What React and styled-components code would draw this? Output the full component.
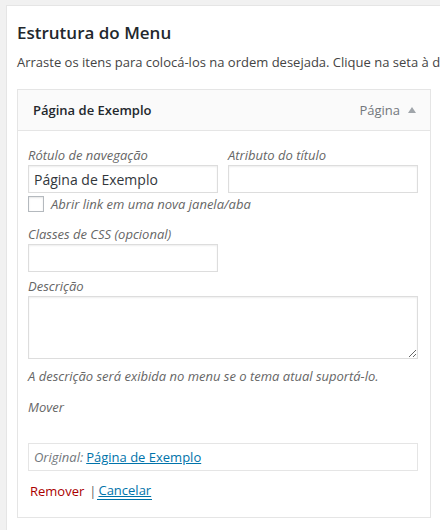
import React from 'react'
import styled, { createGlobalStyle } from 'styled-components'

const GlobalStyle = createGlobalStyle`
  html, body {
    margin: 0;
    padding: 0;
    background: #f1f1f1;
    overflow: hidden;
  }
  body {
    font-family: "Open Sans", "Liberation Sans", sans-serif;
    font-size: 13px;
    color: #444;
  }
`;

const Panel = styled.div`
  margin: 5px 0 0 6px;
  border-left: 1px solid #e5e5e5;
  border-top: 1px solid #e5e5e5;
  background: #fff;
  padding: 17px 10px 12px 10px;
  height: 530px;
  box-sizing: border-box;
`;

const Title = styled.h3`
  margin: 0;
  font-size: 17px;
  line-height: 20px;
  font-weight: 600;
  color: #23282d;
`;

const Intro = styled.p`
  margin: 9px 0 0;
  line-height: 20px;
  white-space: nowrap;
  color: #444;
`;

const Item = styled.div`
  width: 414px;
  margin-top: 17px;
`;

const Handle = styled.div`
  display: flex;
  align-items: center;
  height: 40px;
  padding: 0 14px 0 15px;
  border: 1px solid #e5e5e5;
  background: #fafafa;
`;

const ItemTitle = styled.span`
  flex: 1;
  font-weight: 600;
  color: #23282d;
`;

const ItemType = styled.span`
  color: #72777c;
  margin-right: 8px;
`;

const Arrow = styled.span`
  width: 0;
  height: 0;
  border-left: 4px solid transparent;
  border-right: 4px solid transparent;
  border-bottom: 6px solid #a0a5aa;
`;

const Settings = styled.div`
  padding: 15px 12px 17px 10px;
  border: 1px solid #e5e5e5;
  border-top: none;
`;

const Row = styled.div`
  display: grid;
  grid-template-columns: 190px 190px;
  column-gap: 10px;
`;

const Field = styled.div`
  display: flex;
  flex-direction: column;
  margin-top: ${p => p.$top || 0}px;
`;

const Label = styled.span`
  font-style: italic;
  color: #666;
  line-height: 18px;
  margin-bottom: 1px;
`;

const Input = styled.input`
  box-sizing: border-box;
  width: 190px;
  height: 28px;
  margin: 0;
  padding: 3px 5px;
  border: 1px solid #ddd;
  box-shadow: inset 0 1px 2px rgba(0, 0, 0, 0.07);
  font-family: "Open Sans", "Liberation Sans", sans-serif;
  font-size: 14px;
  color: #32373c;
  outline: none;
`;

const TextArea = styled.textarea`
  box-sizing: border-box;
  width: 390px;
  height: 63px;
  margin: 0;
  border: 1px solid #ddd;
  box-shadow: inset 0 1px 2px rgba(0, 0, 0, 0.07);
  font-family: "Open Sans", "Liberation Sans", sans-serif;
  resize: vertical;
  outline: none;
`;

const CheckRow = styled.label`
  display: flex;
  align-items: center;
  gap: 7px;
  margin-top: 3px;
  height: 16px;
  font-style: italic;
  color: #666;
`;

const Box = styled.span`
  box-sizing: border-box;
  width: 16px;
  height: 16px;
  border: 1px solid #b4b9be;
  background: #fff;
  box-shadow: inset 0 1px 2px rgba(0, 0, 0, 0.1);
`;

const Note = styled.p`
  margin: ${p => p.$top || 0}px 0 0;
  font-style: italic;
  color: #666;
  line-height: 18px;
`;

const Original = styled.div`
  display: flex;
  align-items: center;
  box-sizing: border-box;
  width: 390px;
  height: 28px;
  margin-top: 27px;
  padding: 0 5px;
  border: 1px solid #e5e5e5;
  gap: 3px;
`;

const OriginalLabel = styled.span`
  font-style: italic;
  color: #72777c;
`;

const Link = styled.a`
  color: #0073aa;
  text-decoration: underline;
`;

const Actions = styled.div`
  display: flex;
  align-items: center;
  margin-top: 10px;
  padding-left: 2px;
  line-height: 18px;
`;

const Remove = styled.a`
  color: #a00;
`;

const Sep = styled.span`
  color: #666;
  margin: 0 1px 0 5px;
`;

const Cancel = styled.a`
  color: #0073aa;
  border-bottom: 1px solid #0073aa;
  padding: 0 1px;
`;

export default function App() {
  return (
    <>
      <GlobalStyle />
      <Panel>
        <Title>Estrutura do Menu</Title>
        <Intro>Arraste os itens para colocá-los na ordem desejada. Clique na seta à direita do item para revelar opções de configuração adicionais.</Intro>
        <Item>
          <Handle>
            <ItemTitle>Página de Exemplo</ItemTitle>
            <ItemType>Página</ItemType>
            <Arrow />
          </Handle>
          <Settings>
            <Row>
              <Field>
                <Label>Rótulo de navegação</Label>
                <Input defaultValue="Página de Exemplo" />
              </Field>
              <Field>
                <Label>Atributo do título</Label>
                <Input />
              </Field>
            </Row>
            <CheckRow>
              <Box />
              Abrir link em uma nova janela/aba
            </CheckRow>
            <Field $top={13}>
              <Label>Classes de CSS (opcional)</Label>
              <Input />
            </Field>
            <Field $top={5}>
              <Label>Descrição</Label>
              <TextArea />
            </Field>
            <Note $top={8}>A descrição será exibida no menu se o tema atual suportá-lo.</Note>
            <Note $top={13}>Mover</Note>
            <Original>
              <OriginalLabel>Original:</OriginalLabel>
              <Link href="#">Página de Exemplo</Link>
            </Original>
            <Actions>
              <Remove>Remover</Remove>
              <Sep>|</Sep>
              <Cancel href="#">Cancelar</Cancel>
            </Actions>
          </Settings>
        </Item>
      </Panel>
    </>
  )
}
